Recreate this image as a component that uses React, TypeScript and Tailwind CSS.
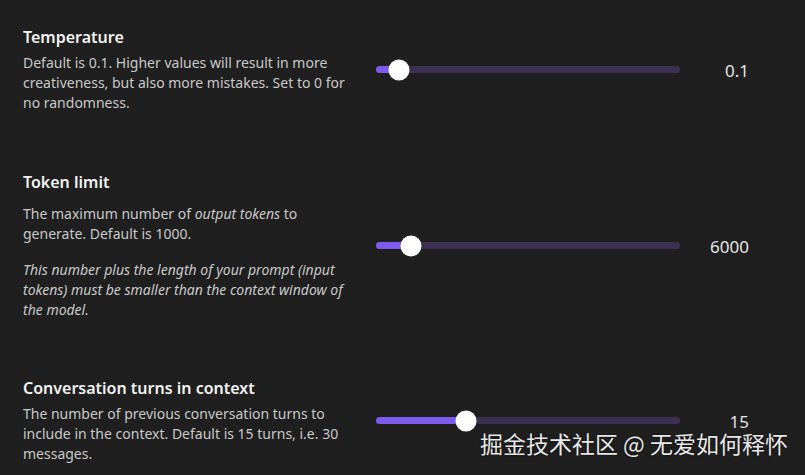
import { ReactNode } from "react";

type SliderProps = {
  // thumb position as a fraction of the track
  pos: number;
  value: string;
};

function Slider({ pos, value }: SliderProps) {
  return (
    <div className="flex items-center">
      <div className="relative w-[304px] h-[7px] rounded-full bg-[#3a3152]">
        <div
          className="absolute left-0 top-0 h-full rounded-full bg-[#7d5bf0]"
          style={{ width: `${pos * 100}%` }}
        />
        <div
          className="absolute top-1/2 w-[21px] h-[21px] -translate-x-1/2 -translate-y-1/2 rounded-full bg-white"
          style={{ left: `${pos * 100}%` }}
        />
      </div>
      <div className="w-[69px] text-right text-[17px] leading-none pt-[2px] text-[#e4e4e4]">{value}</div>
    </div>
  );
}

function Setting({
  title,
  children,
  slider,
  className = "",
  descGap = "mt-[5px]",
}: {
  title: string;
  children: ReactNode;
  slider: ReactNode;
  className?: string;
  descGap?: string;
}) {
  return (
    <div className={`flex items-center ${className}`}>
      <div className="w-[330px] mr-[23px]">
        <h3 className="text-[16px] leading-[22px] font-semibold text-[#f2f2f2]">{title}</h3>
        <div className={`${descGap} text-[14px] leading-[20px] text-[#c9c9c9]`}>{children}</div>
      </div>
      {slider}
    </div>
  );
}

export default function App() {
  return (
    <div
      className="relative w-[805px] h-[475px] overflow-hidden bg-[#1f1f1f] pl-[23px] pt-[26px] flex flex-col"
      style={{ fontFamily: '"Segoe UI", "Noto Sans", "Open Sans", sans-serif' }}
    >
      <Setting title="Temperature" slider={<Slider pos={0.076} value="0.1" />}>
        <p>
          Default is 0.1. Higher values will result in more creativeness, but also more mistakes. Set to
          0 for no randomness.
        </p>
      </Setting>

      <Setting
        title="Token limit"
        className="mt-[58px]"
        descGap="mt-[11px]"
        slider={<Slider pos={0.115} value="6000" />}
      >
        <p>
          The maximum number of <em>output tokens</em> to generate. Default is 1000.
        </p>
        <p className="mt-[16px] italic">
          This number plus the length of your prompt (input tokens) must be smaller than the context
          window of the model.
        </p>
      </Setting>

      <Setting
        title="Conversation turns in context"
        className="mt-[57px]"
        slider={<Slider pos={0.296} value="15" />}
      >
        <p>
          The number of previous conversation turns to include in the context. Default is 15 turns, i.e.
          30 messages.
        </p>
      </Setting>

      {/* site watermark */}
      <div
        className="absolute right-[17px] bottom-[20px] text-[23px] leading-none text-[#e8e8e8] [text-shadow:0_0_2px_rgba(0,0,0,0.8)]"
        style={{ fontFamily: '"Noto Sans CJK SC", "Noto Sans", sans-serif' }}
      >
        掘金技术社区 @ 无爱如何释怀
      </div>
    </div>
  );
}
